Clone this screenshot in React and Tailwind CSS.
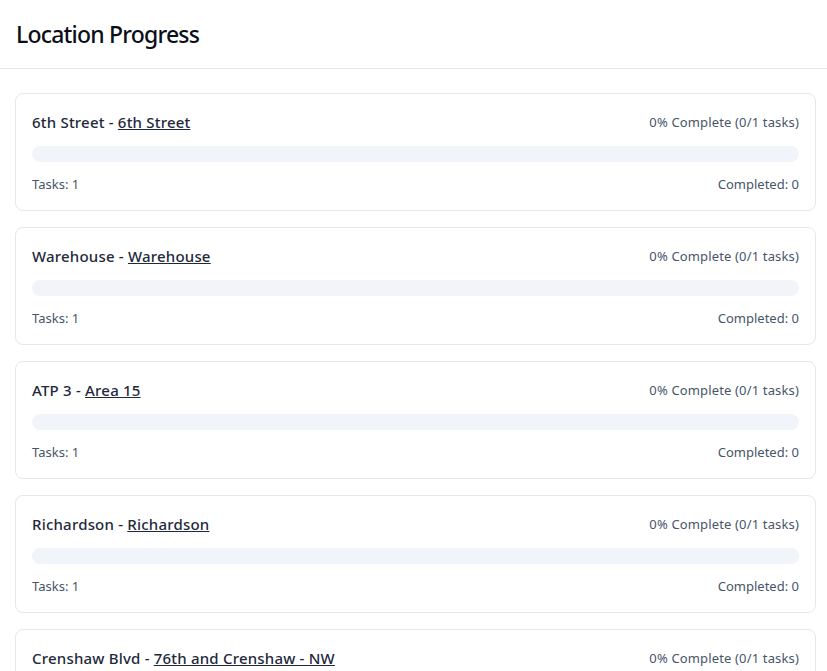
import React from "react";

const items = [
  { loc: "6th Street", area: "6th Street" },
  { loc: "Warehouse", area: "Warehouse" },
  { loc: "ATP 3", area: "Area 15" },
  { loc: "Richardson", area: "Richardson" },
  { loc: "Crenshaw Blvd", area: "76th and Crenshaw - NW" },
];

export default function App() {
  return (
    <div className="min-h-screen bg-white" style={{ fontFamily: '"Noto Sans", "Open Sans", sans-serif' }}>
      <header className="border-b border-[#e2e8f0] px-4 h-[69px] flex items-center">
        <h1 className="text-[23px] leading-8 font-medium tracking-[-0.8px] text-[#0b0f19]">Location Progress</h1>
      </header>
      <main className="pl-[15px] pr-[11px] pt-6 flex flex-col gap-4">
        {items.map((it, i) => (
          <div key={i} className="border border-[#e5e7eb] rounded-lg px-4 pt-4 pb-4 bg-white">
            <div className="flex items-center justify-between h-6">
              <div className="text-[15px] font-medium tracking-[0.2px] text-[#1e293b]">
                {it.loc} - <a href="#" className="underline">{it.area}</a>
              </div>
              <div className="text-[13px] tracking-[0.15px] pt-px text-[#475569]">0% Complete (0/1 tasks)</div>
            </div>
            <div className="mt-3 h-4 rounded-full bg-[#f1f5f9]">
              <div className="h-4 rounded-full bg-[#3b82f6]" style={{ width: "0%" }} />
            </div>
            <div className="mt-3 flex justify-between text-[13px] leading-5 text-[#475569]">
              <span>Tasks: 1</span>
              <span>Completed: 0</span>
            </div>
          </div>
        ))}
      </main>
    </div>
  );
}
